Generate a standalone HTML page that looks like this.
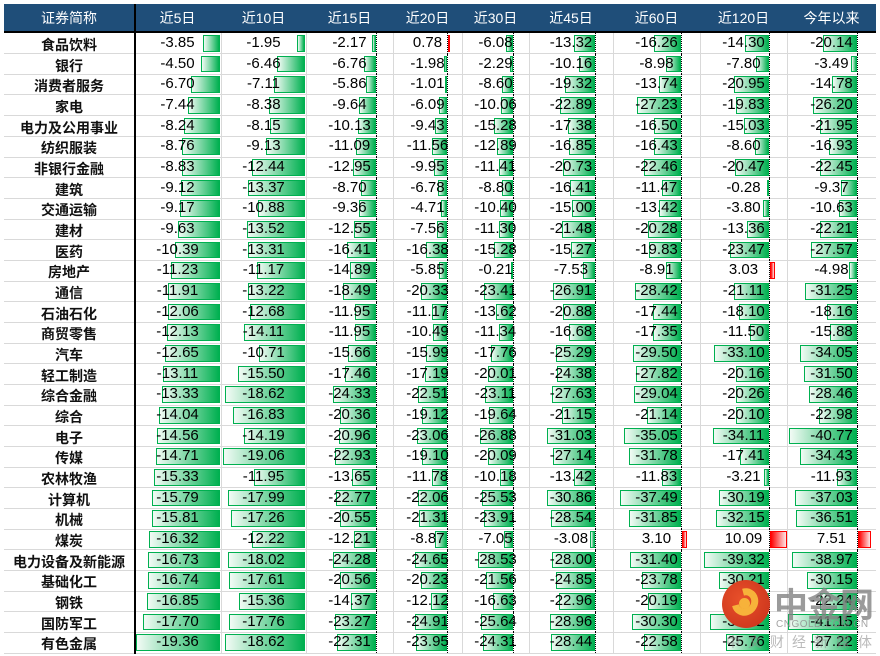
<!DOCTYPE html>
<html><head><meta charset="utf-8">
<style>
html,body{margin:0;padding:0;background:#fff;}
body{width:880px;height:656px;position:relative;overflow:hidden;font-family:"Liberation Sans","Noto Sans CJK SC",sans-serif;}
#hdr{position:absolute;left:4px;top:4px;width:872px;height:28px;background:#1F4E79;}
#hdr span{position:absolute;top:0;height:28px;line-height:28px;color:#fff;font-size:14px;text-align:center;font-family:"Liberation Sans","Noto Sans CJK SC",sans-serif;}
#hline{position:absolute;left:4px;top:31px;width:872px;height:2px;background:#000;}
#vline{position:absolute;left:134px;top:4px;width:1.5px;height:650px;background:#000;}
.r{position:absolute;left:4px;width:872px;border-bottom:1px solid #d9d9d9;box-sizing:border-box;}
.r span{position:absolute;top:0;text-align:center;font-size:15px;color:#000;z-index:2;}
.r span.n{font-size:14px;font-weight:bold;font-family:"Liberation Sans","Noto Sans CJK SC",sans-serif;color:#111;padding-top:2px;box-sizing:border-box;}
.g{position:absolute;top:0;width:1px;background:#d9d9d9;}
.bar{position:absolute;box-sizing:border-box;z-index:1;}
.neg{background:linear-gradient(to right,#f2fbf5,#00b050);border:1px solid #00b050;}
.pos{background:linear-gradient(to right,#ff0000,#ffe5e5);border:1px solid #ff0000;}
.ax{position:absolute;width:0;border-left:1px dotted #000;z-index:3;}
#wm{position:absolute;left:720px;top:578px;width:160px;height:78px;z-index:5;}
</style></head><body>
<div id="hdr">
<span style="left:0;width:130px">证券简称</span>
<span style="left:130px;width:87px">近5日</span>
<span style="left:217px;width:85px">近10日</span>
<span style="left:302px;width:87px">近15日</span>
<span style="left:389px;width:69px">近20日</span>
<span style="left:458px;width:67px">近30日</span>
<span style="left:525px;width:84px">近45日</span>
<span style="left:609px;width:87px">近60日</span>
<span style="left:696px;width:87px">近120日</span>
<span style="left:783px;width:89px">今年以来</span>
</div>
<div id="rows">
<div class="r"><span class="n">食品饮料</span><span>-3.85</span><span>-1.95</span><span>-2.17</span><span>0.78</span><span>-6.08</span><span>-13.32</span><span>-16.26</span><span>-14.30</span><span>-20.14</span></div>
<div class="r"><span class="n">银行</span><span>-4.50</span><span>-6.46</span><span>-6.76</span><span>-1.98</span><span>-2.29</span><span>-10.16</span><span>-8.98</span><span>-7.80</span><span>-3.49</span></div>
<div class="r"><span class="n">消费者服务</span><span>-6.70</span><span>-7.11</span><span>-5.86</span><span>-1.01</span><span>-8.60</span><span>-19.32</span><span>-13.74</span><span>-20.95</span><span>-14.78</span></div>
<div class="r"><span class="n">家电</span><span>-7.44</span><span>-8.38</span><span>-9.64</span><span>-6.09</span><span>-10.06</span><span>-22.89</span><span>-27.23</span><span>-19.83</span><span>-26.20</span></div>
<div class="r"><span class="n">电力及公用事业</span><span>-8.24</span><span>-8.15</span><span>-10.13</span><span>-9.43</span><span>-15.28</span><span>-17.38</span><span>-16.50</span><span>-15.03</span><span>-21.95</span></div>
<div class="r"><span class="n">纺织服装</span><span>-8.76</span><span>-9.13</span><span>-11.09</span><span>-11.56</span><span>-12.89</span><span>-16.85</span><span>-16.43</span><span>-8.60</span><span>-16.93</span></div>
<div class="r"><span class="n">非银行金融</span><span>-8.83</span><span>-12.44</span><span>-12.95</span><span>-9.95</span><span>-11.41</span><span>-20.73</span><span>-22.46</span><span>-20.47</span><span>-22.45</span></div>
<div class="r"><span class="n">建筑</span><span>-9.12</span><span>-13.37</span><span>-8.70</span><span>-6.78</span><span>-8.80</span><span>-16.41</span><span>-11.47</span><span>-0.28</span><span>-9.37</span></div>
<div class="r"><span class="n">交通运输</span><span>-9.17</span><span>-10.88</span><span>-9.36</span><span>-4.71</span><span>-10.40</span><span>-15.00</span><span>-13.42</span><span>-3.80</span><span>-10.63</span></div>
<div class="r"><span class="n">建材</span><span>-9.63</span><span>-13.52</span><span>-12.55</span><span>-7.56</span><span>-11.30</span><span>-21.48</span><span>-20.28</span><span>-13.36</span><span>-22.21</span></div>
<div class="r"><span class="n">医药</span><span>-10.39</span><span>-13.31</span><span>-16.41</span><span>-16.38</span><span>-15.28</span><span>-15.27</span><span>-19.83</span><span>-23.47</span><span>-27.57</span></div>
<div class="r"><span class="n">房地产</span><span>-11.23</span><span>-11.17</span><span>-14.89</span><span>-5.85</span><span>-0.21</span><span>-7.53</span><span>-8.91</span><span>3.03</span><span>-4.98</span></div>
<div class="r"><span class="n">通信</span><span>-11.91</span><span>-13.22</span><span>-18.49</span><span>-20.33</span><span>-23.41</span><span>-26.91</span><span>-28.42</span><span>-21.11</span><span>-31.25</span></div>
<div class="r"><span class="n">石油石化</span><span>-12.06</span><span>-12.68</span><span>-11.95</span><span>-11.17</span><span>-13.62</span><span>-20.88</span><span>-17.44</span><span>-18.10</span><span>-18.16</span></div>
<div class="r"><span class="n">商贸零售</span><span>-12.13</span><span>-14.11</span><span>-11.95</span><span>-10.49</span><span>-11.34</span><span>-16.68</span><span>-17.35</span><span>-11.50</span><span>-15.88</span></div>
<div class="r"><span class="n">汽车</span><span>-12.65</span><span>-10.71</span><span>-15.66</span><span>-15.99</span><span>-17.76</span><span>-25.29</span><span>-29.50</span><span>-33.10</span><span>-34.05</span></div>
<div class="r"><span class="n">轻工制造</span><span>-13.11</span><span>-15.50</span><span>-17.46</span><span>-17.19</span><span>-20.01</span><span>-24.38</span><span>-27.82</span><span>-20.16</span><span>-31.50</span></div>
<div class="r"><span class="n">综合金融</span><span>-13.33</span><span>-18.62</span><span>-24.33</span><span>-22.51</span><span>-23.11</span><span>-27.63</span><span>-29.04</span><span>-20.26</span><span>-28.46</span></div>
<div class="r"><span class="n">综合</span><span>-14.04</span><span>-16.83</span><span>-20.36</span><span>-19.12</span><span>-19.64</span><span>-21.15</span><span>-21.14</span><span>-20.10</span><span>-22.98</span></div>
<div class="r"><span class="n">电子</span><span>-14.56</span><span>-14.19</span><span>-20.96</span><span>-23.06</span><span>-26.88</span><span>-31.03</span><span>-35.05</span><span>-34.11</span><span>-40.77</span></div>
<div class="r"><span class="n">传媒</span><span>-14.71</span><span>-19.06</span><span>-22.93</span><span>-19.10</span><span>-20.09</span><span>-27.14</span><span>-31.78</span><span>-17.41</span><span>-34.43</span></div>
<div class="r"><span class="n">农林牧渔</span><span>-15.33</span><span>-11.95</span><span>-13.65</span><span>-11.78</span><span>-10.18</span><span>-13.42</span><span>-11.83</span><span>-3.21</span><span>-11.93</span></div>
<div class="r"><span class="n">计算机</span><span>-15.79</span><span>-17.99</span><span>-22.77</span><span>-22.06</span><span>-25.53</span><span>-30.86</span><span>-37.49</span><span>-30.19</span><span>-37.03</span></div>
<div class="r"><span class="n">机械</span><span>-15.81</span><span>-17.26</span><span>-20.55</span><span>-21.31</span><span>-23.91</span><span>-28.54</span><span>-31.85</span><span>-32.15</span><span>-36.51</span></div>
<div class="r"><span class="n">煤炭</span><span>-16.32</span><span>-12.22</span><span>-12.21</span><span>-8.87</span><span>-7.05</span><span>-3.08</span><span>3.10</span><span>10.09</span><span>7.51</span></div>
<div class="r"><span class="n">电力设备及新能源</span><span>-16.73</span><span>-18.02</span><span>-24.28</span><span>-24.65</span><span>-28.53</span><span>-28.00</span><span>-31.40</span><span>-39.32</span><span>-38.97</span></div>
<div class="r"><span class="n">基础化工</span><span>-16.74</span><span>-17.61</span><span>-20.56</span><span>-20.23</span><span>-21.56</span><span>-24.85</span><span>-23.78</span><span>-30.21</span><span>-30.15</span></div>
<div class="r"><span class="n">钢铁</span><span>-16.85</span><span>-15.36</span><span>-14.37</span><span>-12.12</span><span>-16.63</span><span>-22.96</span><span>-20.19</span><span>-26.40</span><span>-22.24</span></div>
<div class="r"><span class="n">国防军工</span><span>-17.70</span><span>-17.76</span><span>-23.27</span><span>-24.91</span><span>-25.64</span><span>-28.96</span><span>-30.30</span><span>-35.72</span><span>-41.15</span></div>
<div class="r"><span class="n">有色金属</span><span>-19.36</span><span>-18.62</span><span>-22.31</span><span>-23.95</span><span>-24.31</span><span>-28.44</span><span>-22.58</span><span>-25.76</span><span>-27.22</span></div>
</div>
<div id="hline"></div>
<div id="vline"></div>
<div id="wm">
 <div style="position:absolute;left:2px;top:2px;width:48px;height:48px;border-radius:50%;background:radial-gradient(circle at 40% 40%,#e8502a,#c7301a);"></div>
 <div style="position:absolute;left:12px;top:10px;width:26px;height:28px;border-radius:50%;border:7px solid #f7b23a;border-left-color:transparent;box-sizing:border-box;transform:rotate(30deg);"></div>
 <div style="position:absolute;left:19px;top:20px;width:11px;height:11px;border-radius:50%;background:#f7b23a;"></div>
 <div style="position:absolute;left:54px;top:0px;font-size:34px;font-weight:bold;color:rgba(130,130,130,0.8);letter-spacing:-1px;font-family:'Liberation Sans','Noto Sans CJK SC',sans-serif;">中金网</div>
 <div style="position:absolute;left:56px;top:41px;font-size:10px;color:rgba(140,140,140,0.8);letter-spacing:0.5px;">CNGOLD.COM.CN</div>
 <div style="position:absolute;left:6px;top:54px;font-size:14px;color:rgba(140,140,140,0.6);letter-spacing:8px;font-family:'Liberation Sans','Noto Sans CJK SC',sans-serif;">中文财经新媒体</div>
</div>
<script>
(function(){
 var top0=33, rh=20.67;
 var edges=[4,134,221,306,393,462,529,613,700,787,876];
 var axis=[null,220,305,376,447,513,595,681,769,857];
 var scale=[null,4.33,4.3,1.77,1.3,1.23,1.55,1.63,1.65,1.67];
 var dotted=[false,false,false,true,true,true,true,true,true,true];
 var rows=document.querySelectorAll('#rows .r');
 for(var i=0;i<rows.length;i++){
  var r=rows[i];
  var y=top0+i*rh;
  r.style.top=y+'px'; r.style.height=(rh+0.5)+'px';
  var sp=r.querySelectorAll('span');
  for(var c=0;c<sp.length;c++){
   var s=sp[c];
   s.style.left=(edges[c]-4)+'px';
   s.style.width=(edges[c+1]-edges[c])+'px';
   s.style.lineHeight=(rh)+'px';
   s.style.height=rh+'px';
   if(c>0){
    var v=parseFloat(s.textContent);
    var w=Math.abs(v)*scale[c];
    var b=document.createElement('div');
    b.className='bar '+(v<0?'neg':'pos');
    var ax=axis[c]-4;
    b.style.top='2px'; b.style.height=(rh-4)+'px';
    if(w<2)w=2;
    if(v<0){b.style.left=(ax-w)+'px';}else{b.style.left=(ax+1)+'px';}
    b.style.width=w+'px';
    r.appendChild(b);
    if(dotted[c]){
     var d=document.createElement('div');d.className='ax';
     d.style.left=ax+'px';d.style.top='0';d.style.height=(rh)+'px';
     r.appendChild(d);
    }
   }
  }
  for(var k=2;k<edges.length-1;k++){
   var g=document.createElement('div');g.className='g';
   g.style.left=(edges[k]-4)+'px';g.style.height=rh+'px';
   r.appendChild(g);
  }
 }
})();
</script>
</body></html>
